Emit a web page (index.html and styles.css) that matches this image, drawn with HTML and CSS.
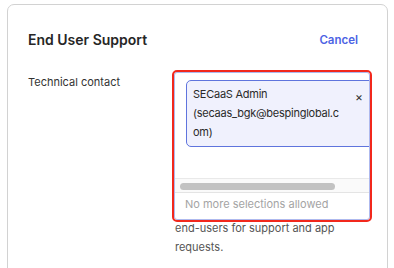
FILE: index.html
```html
<!DOCTYPE html>
<html>
<head>
<meta charset="utf-8">
<link rel="stylesheet" href="styles.css">
</head>
<body>
<div class="card">
  <div class="header">
    <h2 class="title">End User Support</h2>
    <a class="cancel">Cancel</a>
  </div>
  <div class="row">
    <div class="label">Technical contact</div>
    <div class="field">
      <div class="dropdown">
        <div class="selection">
          <div class="chip">
            <span class="chip-text">SECaaS Admin (secaas_bgk@bespinglobal.com)</span>
            <span class="chip-x">×</span>
          </div>
        </div>
        <div class="scrollbar"><div class="thumb"></div></div>
        <div class="notice">No more selections allowed</div>
      </div>
      <p class="help">end-users for support and app requests.</p>
    </div>
  </div>
</div>
</body>
</html>
```

FILE: styles.css
```css
* { box-sizing: border-box; }
html, body { margin: 0; padding: 0; background: #fff; }
body {
  font-family: Inter, "Noto Sans", sans-serif;
  color: #2b2b2b;
  overflow: hidden;
}
.card {
  margin: 4px 0 0 7px;
  width: 381px;
  height: 300px;
  border: 1px solid #d2d2d2;
  border-radius: 7px;
  padding: 24px 20px 0 20px;
}
.header {
  display: flex;
  justify-content: space-between;
  align-items: center;
  height: 22px;
  padding-right: 9px;
}
.title {
  margin: 0;
  font-size: 14px;
  font-weight: 600;
  color: #262626;
  line-height: 22px;
}
.cancel {
  font-size: 11.5px;
  font-weight: 600;
  color: #4d63e4;
  line-height: 22px;
}
.row {
  display: flex;
  margin-top: 19px;
}
.label {
  width: 146px;
  flex: none;
  font-size: 11px;
  line-height: 19px;
  padding-top: 3px;
  color: #333;
}
.field {
  width: 196px;
}
.dropdown {
  position: relative;
  z-index: 1;
  width: 196px;
  border: 1px solid #aeb9ee;
  border-radius: 3px;
  outline: 2px solid #f2281c;
  background: #fff;
  overflow: hidden;
  margin-top: 2px;
}
.selection {
  height: 105px;
  padding: 7px 0 0 11px;
  overflow: hidden;
}
.chip {
  display: flex;
  align-items: flex-start;
  width: 190px;
  border: 1px solid #5f74dd;
  border-radius: 5px;
  background: #f0f1fd;
  padding: 4px 6px 4px 6px;
}
.chip-text {
  width: 150px;
  font-size: 11px;
  letter-spacing: -0.25px;
  line-height: 19px;
  color: #2a2a2a;
  overflow-wrap: anywhere;
}
.chip-x {
  margin-left: 12px;
  font-size: 12px;
  line-height: 19px;
  color: #333;
  padding-top: 2px;
}
.scrollbar {
  height: 15px;
  border-top: 1px solid #e9e9e9;
  border-bottom: 1px solid #e4e4e4;
  background: #fafafa;
  padding: 4px 0 0 5px;
}
.thumb {
  width: 155px;
  height: 7px;
  border-radius: 4px;
  background: #c2c2c2;
}
.notice {
  font-size: 11px;
  color: #a4a4a4;
  line-height: 19px;
  padding: 2px 10px 5px;
}
.help {
  margin: -1px 0 0;
  padding-left: 1px;
  font-size: 11px;
  line-height: 19px;
  color: #555;
}
```
